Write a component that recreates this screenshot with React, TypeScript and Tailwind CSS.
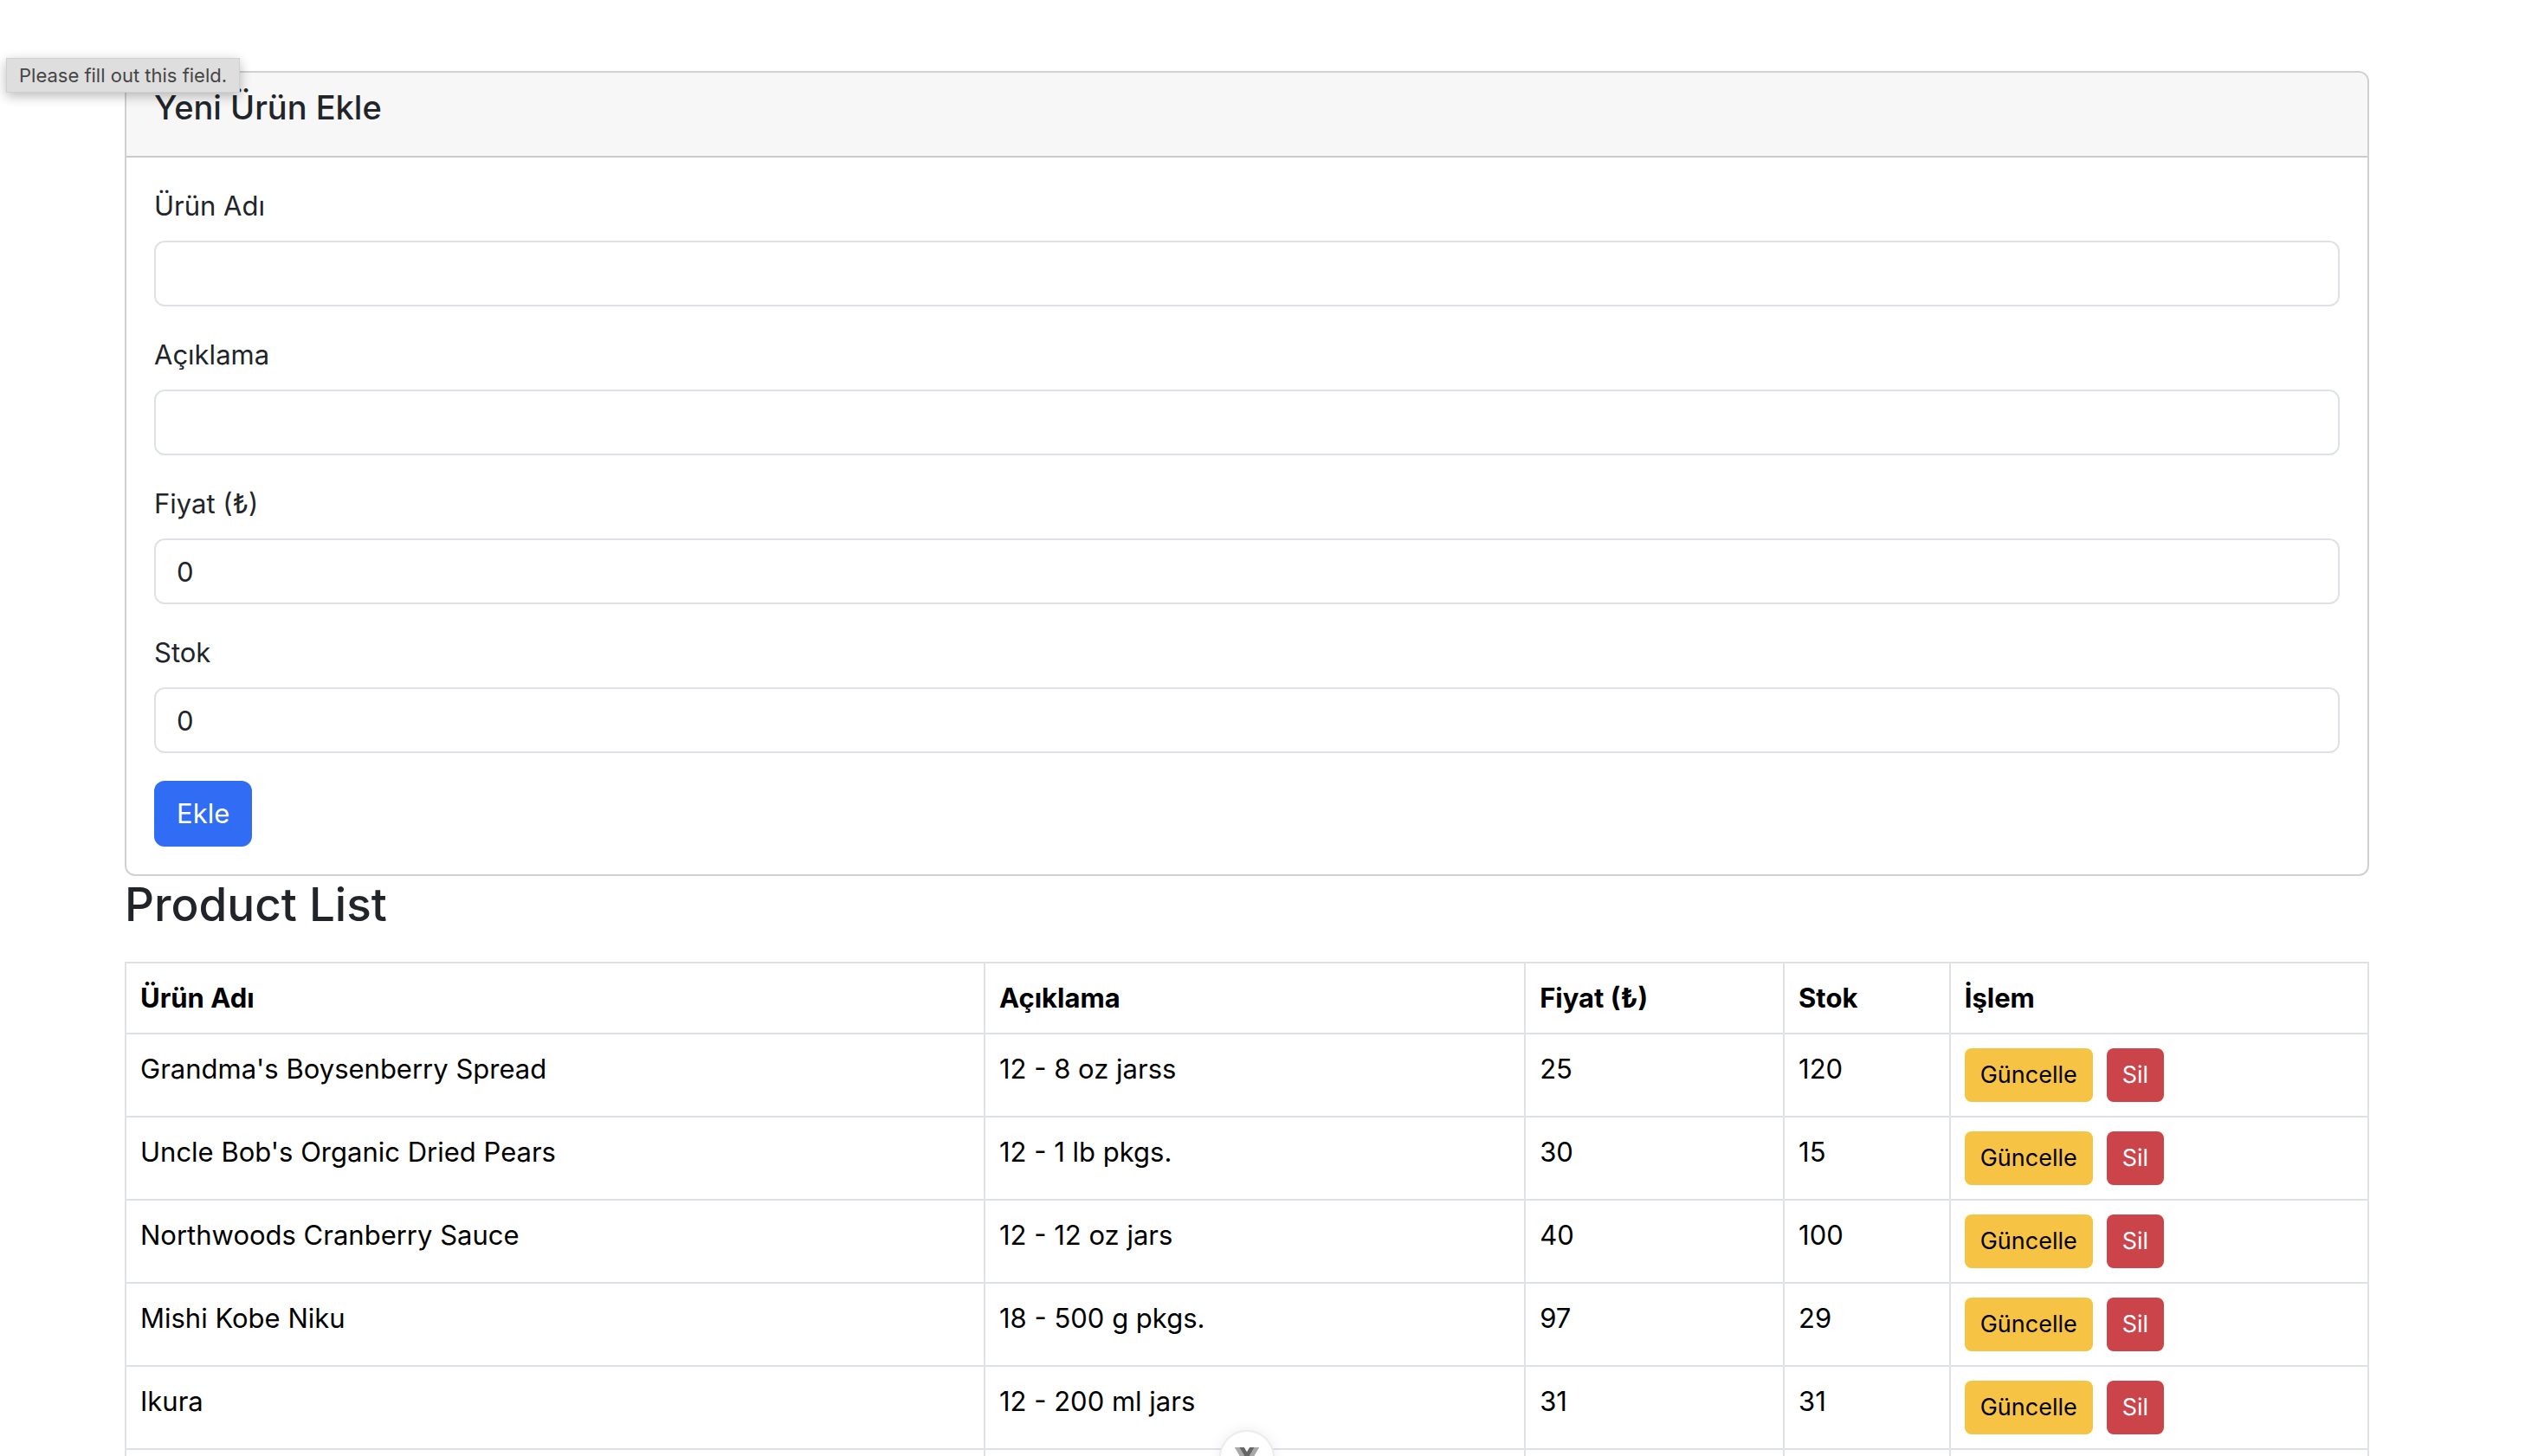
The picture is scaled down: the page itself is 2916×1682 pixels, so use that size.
import React from "react";

type Product = { name: string; description: string; price: number; stock: number };

const products: Product[] = [
  { name: "Grandma's Boysenberry Spread", description: "12 - 8 oz jarss", price: 25, stock: 120 },
  { name: "Uncle Bob's Organic Dried Pears", description: "12 - 1 lb pkgs.", price: 30, stock: 15 },
  { name: "Northwoods Cranberry Sauce", description: "12 - 12 oz jars", price: 40, stock: 100 },
  { name: "Mishi Kobe Niku", description: "18 - 500 g pkgs.", price: 97, stock: 29 },
  { name: "Ikura", description: "12 - 200 ml jars", price: 31, stock: 31 },
];

const cell = "border-2 border-[#dee2e6] p-4 text-left align-top";

function Field({ id, label, type, value }: { id: string; label: string; type: string; value: string }) {
  return (
    <div className="mb-8">
      <label htmlFor={id} className="mb-4 block">
        {label}
      </label>
      <input
        id={id}
        type={type}
        defaultValue={value}
        required
        className="block h-[76px] w-full rounded-xl border-2 border-[#dee2e6] bg-white px-6 py-3 outline-none"
      />
    </div>
  );
}

function ProductForm() {
  return (
    <section className="rounded-xl border-2 border-[#d0d0d0] bg-white">
      <header className="rounded-t-[10px] border-b-2 border-[#cbcbcb] bg-[#f7f7f7] px-8 py-4">
        <h5 className="mb-4 text-[38px] leading-[48px] font-medium">Yeni Ürün Ekle</h5>
      </header>
      <form className="p-8" onSubmit={(e) => e.preventDefault()}>
        <Field id="name" label="Ürün Adı" type="text" value="" />
        <Field id="description" label="Açıklama" type="text" value="" />
        <Field id="price" label="Fiyat (₺)" type="number" value="0" />
        <Field id="stock" label="Stok" type="number" value="0" />
        <button type="submit" className="block h-[76px] rounded-xl bg-[#316cf4] px-[26px] text-white">
          Ekle
        </button>
      </form>
    </section>
  );
}

function ProductTable() {
  return (
    <table className="mt-8 w-full table-fixed border-collapse text-black">
      <colgroup>
        <col className="w-[38.3%]" />
        <col className="w-[24.1%]" />
        <col className="w-[11.54%]" />
        <col className="w-[7.4%]" />
        <col />
      </colgroup>
      <thead>
        <tr className="font-bold">
          <th className={cell}>Ürün Adı</th>
          <th className={cell}>Açıklama</th>
          <th className={cell}>Fiyat (₺)</th>
          <th className={cell}>Stok</th>
          <th className={cell}>İşlem</th>
        </tr>
      </thead>
      <tbody>
        {products.map((p) => (
          <tr key={p.name}>
            <td className={cell}>{p.name}</td>
            <td className={cell}>{p.description}</td>
            <td className={cell}>{p.price}</td>
            <td className={cell}>{p.stock}</td>
            <td className={cell}>
              <div className="flex gap-4 text-[27px] leading-[42px]">
                <button type="button" className="rounded-lg bg-[#f6c344] px-[18px] py-[10px] text-black">
                  Güncelle
                </button>
                <button type="button" className="rounded-lg bg-[#cb444a] px-[18px] py-[10px] text-white">
                  Sil
                </button>
              </div>
            </td>
          </tr>
        ))}
        <tr className="h-24" aria-hidden="true">
          <td className={cell} />
          <td className={cell} />
          <td className={cell} />
          <td className={cell} />
          <td className={cell} />
        </tr>
      </tbody>
    </table>
  );
}

export default function App() {
  return (
    <div className="relative h-screen overflow-hidden bg-white pt-[82px] pr-9 font-['Inter','Noto_Sans',sans-serif] text-[31px] leading-[48px] text-[#212529]">
      <main className="mx-auto max-w-[2640px] px-6">
        <ProductForm />
        <h3 className="text-[53px] leading-[67px] font-medium">Product List</h3>
        <ProductTable />
      </main>

      <div
        role="tooltip"
        className="absolute top-[67px] left-[7px] border border-[#d0d0d0] bg-[#dedede] px-[14px] text-[22px] leading-[38px] text-[#464646] shadow-[0_4px_14px_rgba(0,0,0,0.28)]"
      >
        Please fill out this field.
      </div>

      <div className="absolute inset-x-0 -bottom-[34px] flex justify-center pr-9">
        <button
          type="button"
          aria-label="Toggle devtools"
          className="flex size-16 items-center justify-center rounded-full border-2 border-[#ececec] bg-white shadow-[0_0_16px_rgba(0,0,0,0.08)]"
        >
          <svg viewBox="0 0 256 221" className="w-7" aria-hidden="true">
            <path fill="#a9a9a9" d="M204.8 0H256L128 220.8L0 0h97.92L128 51.2L157.44 0z" />
            <path fill="#a9a9a9" d="m0 0l128 220.8L256 0h-51.2L128 132.48L50.56 0z" />
            <path fill="#666" d="M50.56 0L128 133.12L204.8 0h-47.36L128 51.2L97.92 0z" />
          </svg>
        </button>
      </div>
    </div>
  );
}
